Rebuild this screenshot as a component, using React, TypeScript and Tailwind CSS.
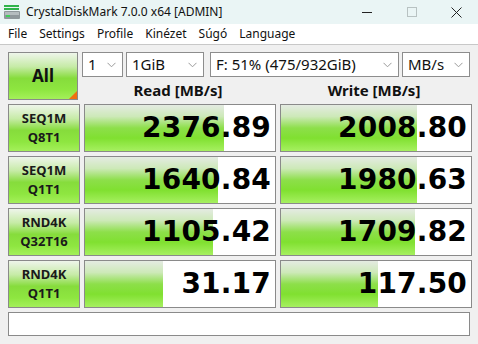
import React from 'react'

const ui = { fontFamily: '"Noto Sans", "Open Sans", sans-serif' }
const big = { fontFamily: '"DejaVu Sans", "Liberation Sans", sans-serif' }

type Row = { a: string; b: string; read: string; write: string; rw: number; ww: number }

const ROWS: Row[] = [
  { a: 'SEQ1M', b: 'Q8T1', read: '2376.89', write: '2008.80', rw: 139, ww: 136 },
  { a: 'SEQ1M', b: 'Q1T1', read: '1640.84', write: '1980.63', rw: 133, ww: 136 },
  { a: 'RND4K', b: 'Q32T16', read: '1105.42', write: '1709.82', rw: 128, ww: 134 },
  { a: 'RND4K', b: 'Q1T1', read: '31.17', write: '117.50', rw: 78, ww: 97 },
]

const labelBg = 'bg-[linear-gradient(180deg,#eef5ea_0%,#c6eba6_30%,#86dc3c_55%,#8ee640_80%,#a4f05a_100%)]'

function Chevron() {
  return (
    <svg width="9" height="6" viewBox="0 0 9 6" className="shrink-0">
      <path d="M0.5 0.8 L4.5 4.8 L8.5 0.8" fill="none" stroke="#9a9a9a" strokeWidth="1" />
    </svg>
  )
}

function Select({ value, w }: { value: string; w: string }) {
  return (
    <div className={`${w} h-[25px] bg-white border border-[#8d8d8d] flex items-center justify-between pl-[5px] pr-[6px]`}>
      <span className="text-[15px] text-[#111]">{value}</span>
      <Chevron />
    </div>
  )
}

function Value({ text, bar }: { text: string; bar: number }) {
  return (
    <div className="relative h-[48px] bg-white border border-[#8a8a8a]">
      <div
        className="absolute left-0 top-0 bottom-0 bg-[linear-gradient(180deg,#e4ebe2_0%,#cde9b8_25%,#8ddf4a_50%,#80e030_72%,#a6f060_100%)]"
        style={{ width: bar }}
      />
      <div className="relative h-full flex items-center justify-end pr-[4px]">
        <span style={big} className="text-[28px] font-bold text-black tracking-[0.2px]">{text}</span>
      </div>
    </div>
  )
}

function DiskIcon() {
  return (
    <svg width="18" height="16" viewBox="0 0 18 16">
      <rect x="1" y="1" width="15" height="2" fill="#2fb34a" />
      <rect x="1" y="4" width="15" height="2" fill="#2fb34a" />
      <rect x="1" y="7" width="16" height="8" rx="1" fill="#8f979b" />
      <rect x="2" y="8" width="14" height="3" fill="#b5bcbf" />
      <rect x="3" y="11" width="4" height="2" fill="#3fd05a" />
    </svg>
  )
}

export default function App(): JSX.Element {
  return (
    <div style={ui} className="w-[478px] h-[344px] bg-[#f0f0f0] flex flex-col overflow-hidden">
      <div className="h-[24px] bg-[#eaf5f5] flex items-center">
        <div className="pl-[3px] pr-[5px] flex items-center"><DiskIcon /></div>
        <span className="text-[12px] text-[#111]">CrystalDiskMark 7.0.0 x64 [ADMIN]</span>
        <div className="ml-auto mr-[-1px] flex items-center">
          <div className="w-[45px] flex justify-center">
            <svg width="10" height="10" viewBox="0 0 10 10"><path d="M0 5.5 H10" stroke="#222" strokeWidth="1" /></svg>
          </div>
          <div className="w-[45px] flex justify-center">
            <svg width="10" height="10" viewBox="0 0 10 10"><rect x="0.5" y="0.5" width="9" height="9" fill="none" stroke="#b8c2c2" strokeWidth="1" /></svg>
          </div>
          <div className="w-[45px] flex justify-center">
            <svg width="11" height="11" viewBox="0 0 11 11"><path d="M0.5 0.5 L10.5 10.5 M10.5 0.5 L0.5 10.5" stroke="#222" strokeWidth="1" /></svg>
          </div>
        </div>
      </div>

      <div className="h-[21px] bg-white border-b border-[#c8c8c8] flex items-center text-[12px] text-[#111] pl-[8px] gap-[12px]">
        <span>File</span>
        <span>Settings</span>
        <span>Profile</span>
        <span>Kinézet</span>
        <span>Súgó</span>
        <span>Language</span>
      </div>

      <div className="px-[8px] pt-[7px] flex flex-col gap-[4px]">
        <div className="flex gap-[4px] h-[48px]">
          <div className={`relative w-[72px] h-[48px] border border-[#8a8a8a] ${labelBg} flex items-center justify-center`}>
            <span className="text-[17px] font-bold text-[#111]">All</span>
            <div className="absolute right-0 bottom-0 w-0 h-0 border-l-[8px] border-l-transparent border-b-[8px] border-b-[#f07010]" />
          </div>
          <div className="flex flex-col w-[388px]">
            <div className="flex">
              <Select value="1" w="w-[41px]" />
              <div className="w-[3px]" />
              <Select value="1GiB" w="w-[78px]" />
              <div className="w-[6px]" />
              <Select value="F: 51% (475/932GiB)" w="w-[189px]" />
              <div className="w-[3px]" />
              <Select value="MB/s" w="w-[68px]" />
            </div>
            <div className="flex mt-[4px] h-[19px] leading-[19px]">
              <div className="w-[192px] text-center text-[15px] font-bold text-[#111]">Read [MB/s]</div>
              <div className="w-[4px]" />
              <div className="w-[192px] text-center text-[15px] font-bold text-[#111]">Write [MB/s]</div>
            </div>
          </div>
        </div>

        {ROWS.map((r, i) => (
          <div key={i} className="grid grid-cols-[72px_192px_192px] gap-[4px]">
            <div className={`h-[48px] border border-[#8a8a8a] ${labelBg} flex flex-col items-center justify-center leading-[19px] text-[13px] font-bold text-[#1a1a1a]`}>
              <span>{r.a}</span>
              <span>{r.b}</span>
            </div>
            <Value text={r.read} bar={r.rw} />
            <Value text={r.write} bar={r.ww} />
          </div>
        ))}

        <div className="h-[24px] bg-white border border-[#8a8a8a]" />
      </div>
    </div>
  )
}
